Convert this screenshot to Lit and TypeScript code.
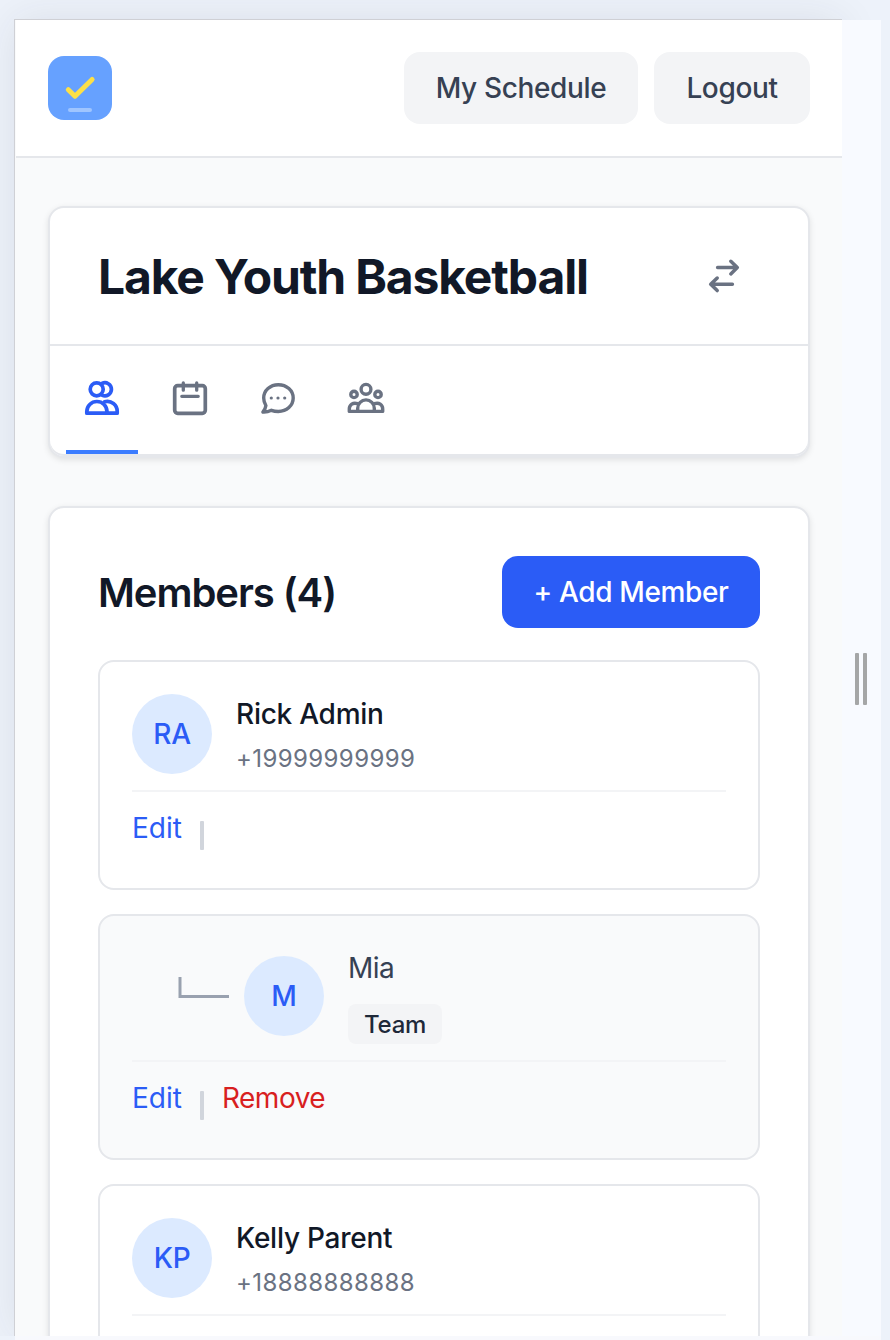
import { LitElement, html, css, svg, nothing } from "lit";
import { customElement, property } from "lit/decorators.js";

interface Member {
  name: string;
  initials: string;
  phone?: string;
  badge?: string;
  child?: boolean;
  editable?: boolean;
  removable?: boolean;
}

const members: Member[] = [
  { name: "Rick Admin", initials: "RA", phone: "+19999999999", editable: true },
  { name: "Mia", initials: "M", badge: "Team", child: true, editable: true, removable: true },
  { name: "Kelly Parent", initials: "KP", phone: "+18888888888" },
];

const glyphs = {
  people: svg`
    <circle cx="14.7" cy="11.3" r="6.5"/>
    <path d="M20 5.5A6.5 6.5 0 1 1 20 17.1"/>
    <path d="M4.8 35.2V33.600A10.100 10.100 0 0 1 25 33.600V35.200Z"/>
    <path d="M22.600 23.800A9.800 9.800 0 0 1 35.200 33.600V35.200H25"/>`,
  calendar: svg`
    <rect x="4.700" y="7.700" width="30.600" height="27.600" rx="3"/>
    <path d="M13.300 5v7.200M26.700 5v7.200M11.800 18.300h16.400" stroke-width="3.300"/>`,
  chat: svg`
    <path d="M20.300 6.700C12.200 6.700 5.700 12.500 5.700 20c0 2.900.8 5.400 2.200 7.600C7.500 30.400 6.500 32.500 4.900 34c2.800.2 5.800-.4 8.500-1.700 2.100.8 4.400 1.200 6.900 1.200 8.400 0 14.900-6 14.900-13.500S28.700 6.700 20.300 6.700Z" stroke-width="3.400"/>
    <g fill="currentColor" stroke="none"><circle cx="13.300" cy="20" r="1.600"/><circle cx="20" cy="20" r="1.600"/><circle cx="26.700" cy="20" r="1.600"/></g>`,
  group: svg`
    <g stroke-width="3.400">
    <circle cx="20" cy="11.300" r="4.900"/>
    <circle cx="8" cy="16.400" r="3.200"/><circle cx="32" cy="16.400" r="3.200"/>
    <path d="M11.700 33.400V30.200a8.300 8.300 0 0 1 16.600 0v3.200Z"/>
    <path d="M11.600 25.700C7 24 3.300 26.800 3.300 31v2.400h8.400M28.400 25.700c4.600-1.700 8.300 1.100 8.300 5.300v2.400h-8.400"/>
    </g>`,
};

@customElement("tab-icon")
class TabIcon extends LitElement {
  @property() name: keyof typeof glyphs = "people";
  static styles = css`
    :host { display: block; width: 40px; height: 40px; }
    svg { display: block; }
  `;
  render() {
    return html`<svg width="40" height="40" viewBox="0 0 40 40" fill="none" stroke="currentColor"
      stroke-width="3.700" stroke-linecap="round" stroke-linejoin="round">${glyphs[this.name]}</svg>`;
  }
}

@customElement("member-card")
class MemberCard extends LitElement {
  @property({ attribute: false }) member!: Member;
  static styles = css`
    :host { display: block; }
    .card { border: 2px solid #e5e7eb; border-radius: 16px; padding: 32px; background: #fff; }
    .card.child { background: #f9fafb; }
    .top { display: flex; align-items: center; padding-bottom: 16px; border-bottom: 2px solid #f3f4f6; }
    .elbow { margin: 0 15px 16px 46px; width: 51px; height: 22px; }
    .elbow svg { display: block; }
    .avatar {
      width: 80px; height: 80px; border-radius: 50%; background: #dceaff; color: #2b5cf6;
      display: flex; align-items: center; justify-content: center; font-weight: 500; font-size: 28px;
      letter-spacing: -0.3px; margin-right: 24px;
    }
    .name { line-height: 40px; font-size: 28px; font-weight: 500; color: #111827; letter-spacing: -0.25px; }
    .child .name { font-weight: 400; color: #364153; letter-spacing: -0.5px; }
    .phone { margin-top: 8px; padding-top: 1px; line-height: 31px; font-size: 24px; color: #6a7282; letter-spacing: 0.4px; }
    .badge {
      display: inline-block; box-sizing: border-box; margin-top: 16px; height: 40px; line-height: 41px; padding: 0 16px;
      border-radius: 8px; background: #f3f4f6; color: #1e2939; font-size: 24px; font-weight: 500;
      letter-spacing: -0.25px; vertical-align: top;
    }
    .actions { display: flex; box-sizing: border-box; padding-top: 16px; height: 64px; font-size: 28px; line-height: 40px; }
    .edit { color: #2b5cf6; }
    .remove { color: #d81f1f; letter-spacing: -0.5px; }
    .bar { width: 4px; height: 29px; margin: 13px 18px 0; background: #d1d5dc; border-radius: 1px; }
  `;
  render() {
    const m = this.member;
    return html`<article class="card ${m.child ? "child" : ""}">
      <div class="top">
        ${m.child
          ? html`<div class="elbow"><svg width="51" height="22" viewBox="0 0 51 22" fill="none" stroke="#99a1af" stroke-width="3"><path d="M2 0v19.500h49"/></svg></div>`
          : nothing}
        <div class="avatar">${m.initials}</div>
        <div>
          <div class="name">${m.name}</div>
          ${m.phone ? html`<div class="phone">${m.phone}</div>` : nothing}
          ${m.badge ? html`<span class="badge">${m.badge}</span>` : nothing}
        </div>
      </div>
      <div class="actions">
        ${m.editable ? html`<span class="edit">Edit</span><span class="bar"></span>` : nothing}
        ${m.removable ? html`<span class="remove">Remove</span>` : nothing}
      </div>
    </article>`;
  }
}

@customElement("app-root")
class AppRoot extends LitElement {
  static styles = css`
    :host {
      display: block; box-sizing: border-box; width: 890px; height: 1340px; overflow: hidden;
      padding: 19px 9px 0 14px; background: #edf2fa;
      font-family: Inter, "Liberation Sans", sans-serif; color: #111827;
    }
    .panel { display: flex; height: 1317px; }
    .screen {
      box-sizing: border-box; width: 828px; height: 1317px; overflow: hidden; flex: none;
      border-top: 1px solid #cfd0d5; border-left: 1px solid #cfd0d5; padding-left: 1px; background: #f9fafb;
    }
    .frame {
      flex: none; width: 828px; height: 1317px; box-shadow: 0 0 40px rgba(40, 40, 60, 0.09);
      clip-path: inset(-19px -48px 0 -14px);
    }
    .foot { height: 4px; margin-left: 1px; background: #f8f9fd; }
    header {
      display: flex; align-items: center; gap: 16px; height: 136px; padding: 0 32px;
      background: #fff; border-bottom: 2px solid #e5e7eb;
    }
    .logo { margin-right: auto; display: block; }
    .btn {
      height: 72px; line-height: 72px; border-radius: 16px; background: #f3f4f6; color: #364153;
      text-align: center; font-size: 28px; font-weight: 500; letter-spacing: -0.36px;
    }
    .schedule { width: 234px; }
    .logout { width: 156px; }
    main { display: flex; flex-direction: column; gap: 48px; padding: 48px 32px; }
    .card {
      border: 2px solid #e5e7eb; border-radius: 16px; background: #fff;
      box-shadow: 0 2px 6px rgba(0, 0, 0, 0.1);
    }
    .title { display: flex; align-items: center; justify-content: space-between; height: 136px; padding: 0 64px 0 48px; border-bottom: 2px solid #e5e7eb; }
    h1 { margin: 0; font-size: 48px; font-weight: 700; letter-spacing: -1.15px; white-space: nowrap; }
    .tabs {
      display: flex; gap: 16px; padding: 0 16px; color: #6a7282; background: #fff;
      border-radius: 0 0 14px 14px; margin-bottom: 2px;
    }
    .nav { background: #e5e7eb; border-radius: 0 0 14px 14px; display: flow-root; }
    .tab { padding: 32px 16px; border-bottom: 4px solid transparent; }
    .tab.active { color: #2b5cf6; border-color: #3b7cff; }
    .members { padding: 48px; }
    .head { display: flex; align-items: center; justify-content: space-between; margin-bottom: 32px; }
    h2 { margin: 0; font-size: 40px; font-weight: 600; letter-spacing: -1.05px; }
    .add { width: 258px; background: #2b5cf6; color: #fff; }
    .list { display: flex; flex-direction: column; gap: 24px; }
    .side { position: relative; flex: 1; margin-top: 1px; background: #f8faff; }
    .grip { display: flex; gap: 4px; padding: 633px 0 0 13px; }
    .bar { width: 4px; height: 52px; border-radius: 1px; background: #a5a6a7; }
  `;
  render() {
    return html`<div class="panel">
      <div class="frame"><div class="screen">
        <header>
          <svg class="logo" width="64" height="64" viewBox="0 0 64 64" fill="none">
            <rect width="64" height="64" rx="16" fill="#66a1ff"/>
            <path d="M20.300 33.700l6.700 6.500 17.100-16.700" stroke="#fde047" stroke-width="5" stroke-linecap="round" stroke-linejoin="round"/>
            <rect x="20" y="52" width="24" height="4" rx="2" fill="#9fc5ff"/>
          </svg>
          <div class="btn schedule">My Schedule</div>
          <div class="btn logout">Logout</div>
        </header>
        <main>
          <section class="card">
            <div class="title">
              <h1>Lake Youth Basketball</h1>
              <svg width="40" height="40" viewBox="0 0 40 40" fill="none" stroke="#6a7282" stroke-width="3.500" stroke-linecap="round" stroke-linejoin="round">
                <path d="M13.600 11.600h19.400M26.800 5.300l6.500 6.300-6.500 6.300M28.400 28.300H9M13.200 22l-6.500 6.300 6.500 6.300"/>
              </svg>
            </div>
            <div class="nav"><nav class="tabs">
              <div class="tab active"><tab-icon name="people"></tab-icon></div>
              <div class="tab"><tab-icon name="calendar"></tab-icon></div>
              <div class="tab"><tab-icon name="chat"></tab-icon></div>
              <div class="tab"><tab-icon name="group"></tab-icon></div>
            </nav></div>
          </section>
          <section class="card members">
            <div class="head"><h2>Members (4)</h2><div class="btn add">+ Add Member</div></div>
            <div class="list">${members.map((m) => html`<member-card .member=${m}></member-card>`)}</div>
          </section>
        </main>
      </div></div>
      <div class="side"><div class="grip"><div class="bar"></div><div class="bar"></div></div></div>
    </div>
    <div class="foot"></div>`;
  }
}
